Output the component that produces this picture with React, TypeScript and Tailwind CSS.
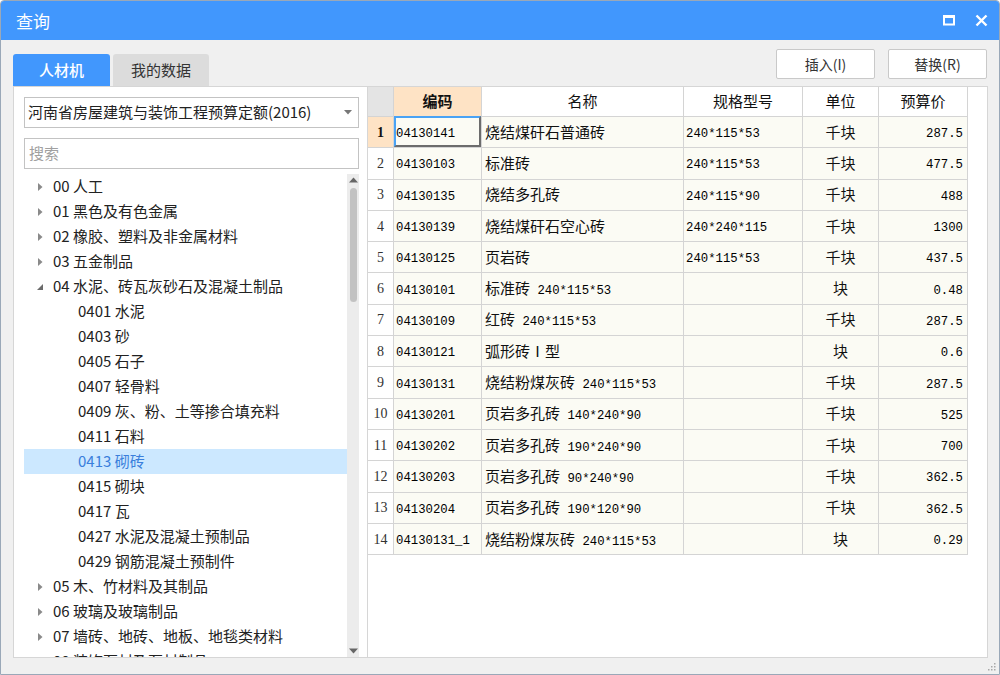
import React from 'react';

const UI = '"Noto Sans CJK SC", "Noto Sans", sans-serif';

type Node = { label: string; level: 0 | 1; state?: 'closed' | 'open'; selected?: boolean };

const TREE: Node[] = [
  { label: '00 人工', level: 0, state: 'closed' },
  { label: '01 黑色及有色金属', level: 0, state: 'closed' },
  { label: '02 橡胶、塑料及非金属材料', level: 0, state: 'closed' },
  { label: '03 五金制品', level: 0, state: 'closed' },
  { label: '04 水泥、砖瓦灰砂石及混凝土制品', level: 0, state: 'open' },
  { label: '0401 水泥', level: 1 },
  { label: '0403 砂', level: 1 },
  { label: '0405 石子', level: 1 },
  { label: '0407 轻骨料', level: 1 },
  { label: '0409 灰、粉、土等掺合填充料', level: 1 },
  { label: '0411 石料', level: 1 },
  { label: '0413 砌砖', level: 1, selected: true },
  { label: '0415 砌块', level: 1 },
  { label: '0417 瓦', level: 1 },
  { label: '0427 水泥及混凝土预制品', level: 1 },
  { label: '0429 钢筋混凝土预制件', level: 1 },
  { label: '05 木、竹材料及其制品', level: 0, state: 'closed' },
  { label: '06 玻璃及玻璃制品', level: 0, state: 'closed' },
  { label: '07 墙砖、地砖、地板、地毯类材料', level: 0, state: 'closed' },
  { label: '08 装饰石材及石材制品', level: 0, state: 'closed' },
];

const ROWS = [
  ['04130141', '烧结煤矸石普通砖', '240*115*53', '千块', '287.5'],
  ['04130103', '标准砖', '240*115*53', '千块', '477.5'],
  ['04130135', '烧结多孔砖', '240*115*90', '千块', '488'],
  ['04130139', '烧结煤矸石空心砖', '240*240*115', '千块', '1300'],
  ['04130125', '页岩砖', '240*115*53', '千块', '437.5'],
  ['04130101', '标准砖 240*115*53', '', '块', '0.48'],
  ['04130109', '红砖 240*115*53', '', '千块', '287.5'],
  ['04130121', '弧形砖Ⅰ型', '', '块', '0.6'],
  ['04130131', '烧结粉煤灰砖 240*115*53', '', '千块', '287.5'],
  ['04130201', '页岩多孔砖 140*240*90', '', '千块', '525'],
  ['04130202', '页岩多孔砖 190*240*90', '', '千块', '700'],
  ['04130203', '页岩多孔砖 90*240*90', '', '千块', '362.5'],
  ['04130204', '页岩多孔砖 190*120*90', '', '千块', '362.5'],
  ['04130131_1', '烧结粉煤灰砖 240*115*53', '', '块', '0.29'],
];

// cjk runs at 15px, latin runs narrow mono like SimSun half-width
function Mixed({ text }: { text: string }) {
  const parts = text.split(/([\u4e00-\u9fff\u2160、]+)/).filter(Boolean);
  return (
    <>
      {parts.map((p, i) =>
        /[\u4e00-\u9fff\u2160、]/.test(p) ? (
          <span key={i} className="text-[15px]" style={{ fontFamily: UI }}>
            {p}
          </span>
        ) : (
          <span key={i} className="font-['Liberation_Mono',monospace] text-[12.3px] whitespace-pre text-black">
            {p}
          </span>
        )
      )}
    </>
  );
}

function Caret({ open }: { open?: boolean }) {
  if (open)
    return (
      <svg width="8" height="8" viewBox="0 0 8 8">
        <path d="M7 1 L7 7 L1 7 Z" fill="#6b6b6b" />
      </svg>
    );
  return (
    <svg width="8" height="10" viewBox="0 0 8 10">
      <path d="M2 1 L6.5 5 L2 9 Z" fill="#8a8a8a" />
    </svg>
  );
}

const COLS = ['w-[88px]', 'w-[202px]', 'w-[119px]', 'w-[76px]', 'w-[89px]'];
const ALIGN = ['justify-start pl-[2px]', 'justify-start pl-[3px]', 'justify-start pl-[2px]', 'justify-center', 'justify-end pr-[4px]'];

export default function App() {
  return (
    <div
      className="flex h-[675px] w-[1000px] flex-col overflow-hidden rounded-t-[4px] border border-[#9aa8b8] bg-[#f0f0f0]"
      style={{ fontFamily: UI }}
    >
      {/* title bar */}
      <div className="flex h-[39px] shrink-0 items-center bg-[#4197fd] pl-[15px] pr-[11px] text-white">
        <span className="text-[17px] leading-none">查询</span>
        <div className="ml-auto flex items-center gap-[20px]">
          <svg width="12" height="11" viewBox="0 0 12 11">
            <rect x="1" y="1.5" width="10" height="8" fill="none" stroke="#fff" strokeWidth="2" />
            <rect x="0" y="0" width="12" height="3" fill="#fff" />
          </svg>
          <svg width="13" height="13" viewBox="0 0 13 13">
            <path d="M1.5 1.5 L11.5 11.5 M11.5 1.5 L1.5 11.5" stroke="#fff" strokeWidth="2.4" />
          </svg>
        </div>
      </div>

      <div className="flex min-h-0 flex-1 flex-col pl-[12px] pr-[11px] pb-[16px]">
        {/* tabs + buttons */}
        <div className="flex h-[46px] shrink-0">
          <div className="mt-auto flex gap-[3px]">
            <div className="flex h-[32px] w-[97px] items-center justify-center rounded-t-[3px] bg-[#4197fd] text-[15px] font-medium text-white">
              人材机
            </div>
            <div className="flex h-[32px] w-[96px] items-center justify-center rounded-t-[3px] bg-[#dcdcdc] text-[15px] text-[#333]">
              我的数据
            </div>
          </div>
          <div className="ml-auto mt-[9px] mr-[1px] flex gap-[13px]">
            {['插入(I)', '替换(R)'].map((b) => (
              <button
                key={b}
                className="flex h-[30px] w-[99px] items-center justify-center rounded-[2px] border border-[#c9c9c9] bg-white text-[14px] text-[#333]"
              >
                {b}
              </button>
            ))}
          </div>
        </div>

        {/* main area */}
        <div className="flex min-h-0 flex-1">
          {/* left panel */}
          <div className="flex w-[354px] shrink-0 flex-col border border-r-0 border-[#d6d6d6] bg-white pl-[10px] pr-[8px] pt-[10px]">
            <div className="flex h-[31px] shrink-0 items-center border border-[#c3c3c3] pl-[3px] pr-[6px] text-[15px] text-[#222]">
              <span>河南省房屋建筑与装饰工程预算定额(2016)</span>
              <svg className="ml-auto" width="8" height="5" viewBox="0 0 8 5">
                <path d="M0 0 L8 0 L4 4.5 Z" fill="#777" />
              </svg>
            </div>
            <div className="mt-[10px] flex h-[31px] shrink-0 items-center border border-[#c3c3c3] pl-[4px] text-[15px] text-[#a0a0a0]">
              搜索
            </div>
            <div className="mt-[5px] flex min-h-0 flex-1">
              <div className="min-w-0 flex-1 overflow-hidden">
                {TREE.map((n) => (
                  <div
                    key={n.label}
                    className={`flex h-[25px] items-center text-[15px] ${
                      n.selected ? 'bg-[#cce8ff] text-[#3a7fdc]' : 'text-[#222]'
                    }`}
                  >
                    {n.level === 0 ? (
                      <>
                        <span className="flex w-[29px] items-center justify-center pl-[3px]">
                          <Caret open={n.state === 'open'} />
                        </span>
                        <span>{n.label}</span>
                      </>
                    ) : (
                      <span className="pl-[54px]">{n.label}</span>
                    )}
                  </div>
                ))}
              </div>
              {/* scrollbar */}
              <div className="flex w-[12px] shrink-0 flex-col items-center bg-[#ececec]">
                <svg className="mt-[3px]" width="9" height="6" viewBox="0 0 9 6">
                  <path d="M0 5.5 L9 5.5 L4.5 0.5 Z" fill="#666" />
                </svg>
                <div className="mt-[5px] h-[114px] w-[7px] rounded-full bg-[#c2c2c2]" />
                <svg className="mt-auto mb-[3px]" width="9" height="6" viewBox="0 0 9 6">
                  <path d="M0 0.5 L9 0.5 L4.5 5.5 Z" fill="#666" />
                </svg>
              </div>
            </div>
          </div>

          {/* right panel */}
          <div className="min-w-0 flex-1 border border-[#d6d6d6] bg-white">
            <div className="w-[600px] font-['Liberation_Mono',monospace] text-[#111]">
              <div className="flex h-[30px] border-b border-[#d4d4d4] text-[15px]" style={{ fontFamily: UI }}>
                <div className="w-[26px] border-r border-[#d4d4d4] bg-[#e4e4e4]" />
                <div className="flex w-[88px] items-center justify-center border-r border-[#d4d4d4] bg-[#fee3c5] font-bold">
                  编码
                </div>
                <div className="flex w-[202px] items-center justify-center border-r border-[#d4d4d4]">名称</div>
                <div className="flex w-[119px] items-center justify-center border-r border-[#d4d4d4]">规格型号</div>
                <div className="flex w-[76px] items-center justify-center border-r border-[#d4d4d4]">单位</div>
                <div className="flex w-[89px] items-center justify-center border-r border-[#d4d4d4]">预算价</div>
              </div>
              {ROWS.map((r, i) => (
                <div key={i} className="flex h-[31.3px] border-b border-[#d4d4d4]">
                  <div
                    className={`flex w-[26px] items-center justify-center border-r border-[#d4d4d4] font-['Liberation_Serif',serif] text-[14px] ${
                      i === 0 ? 'bg-[#fee3c5] font-bold' : 'bg-white text-[#333]'
                    }`}
                  >
                    {i + 1}
                  </div>
                  {r.map((c, j) => (
                    <div
                      key={j}
                      className={`relative flex items-center border-r border-[#d4d4d4] bg-[#fbfbf4] pt-[2px] ${COLS[j]} ${ALIGN[j]}`}
                    >
                      {i === 0 && j === 0 && (
                        <div className="absolute -top-px left-0 right-0 bottom-0 border-l-2 border-t-2 border-b-2 border-r-2 border-l-[#4aa3f5] border-t-[#4aa3f5] border-b-[#6c6c6c] border-r-[#6c6c6c]" />
                      )}
                      <span className="relative">
                        <Mixed text={c} />
                      </span>
                    </div>
                  ))}
                </div>
              ))}
            </div>
          </div>
        </div>
      </div>

      {/* resize grip */}
      <div className="relative h-0">
        <svg className="absolute bottom-[3px] right-[3px]" width="10" height="10" viewBox="0 0 10 10">
          {[
            [8, 2],
            [5, 5],
            [8, 5],
            [2, 8],
            [5, 8],
            [8, 8],
          ].map(([x, y]) => (
            <rect key={`${x}-${y}`} x={x} y={y} width="1.5" height="1.5" fill="#a8a8a8" />
          ))}
        </svg>
      </div>
    </div>
  );
}
